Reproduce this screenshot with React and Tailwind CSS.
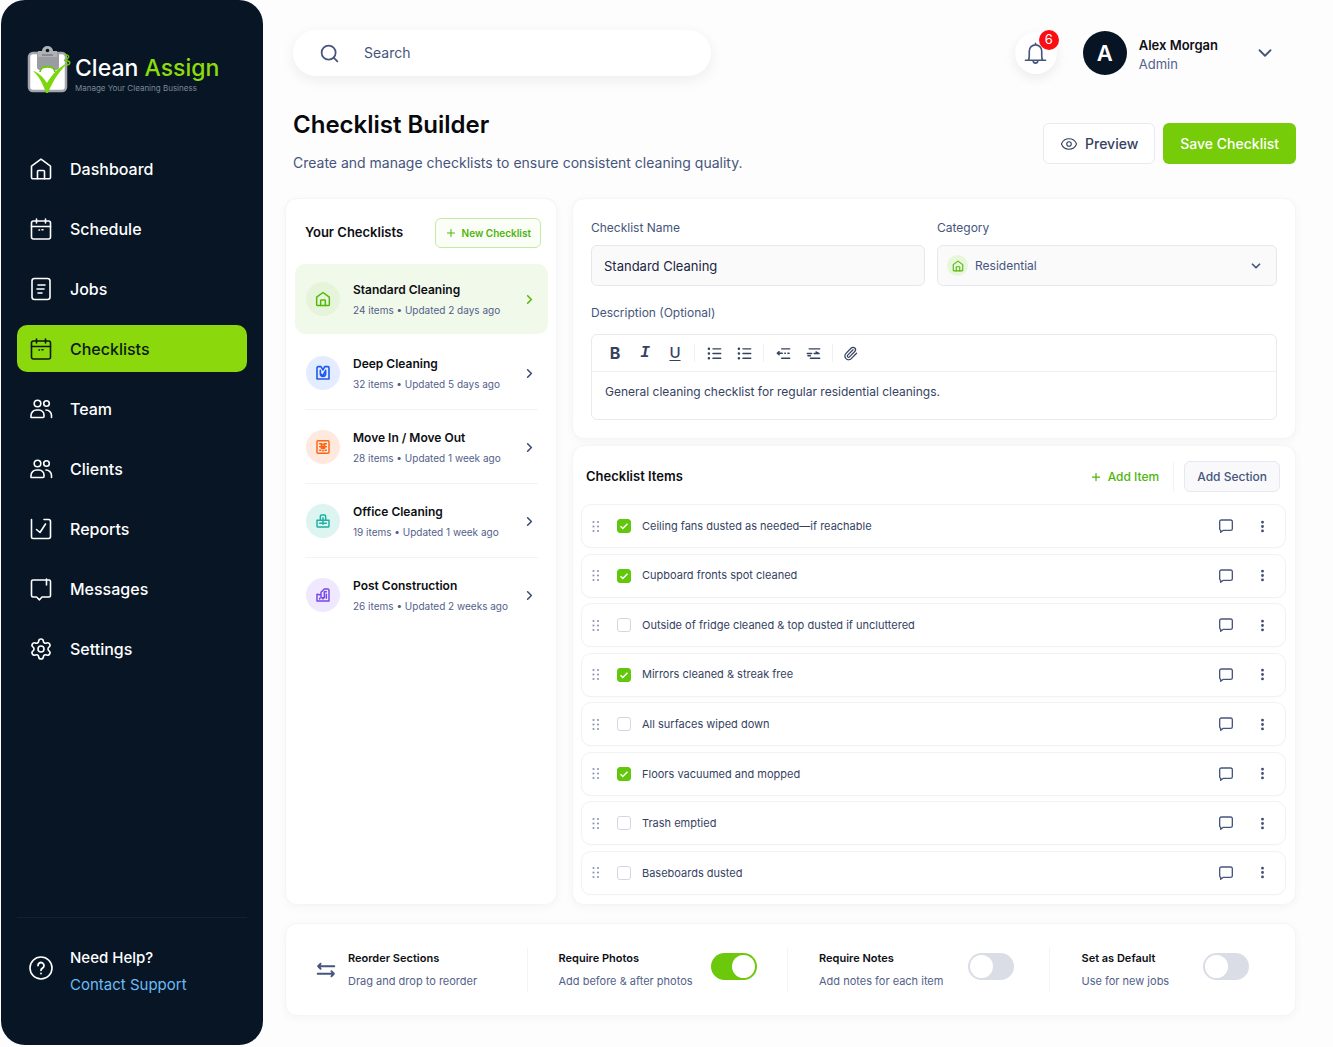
import { useState } from 'react'
import clsx from 'clsx'
import { ChevronDown, ChevronRight, EllipsisVertical, Eye, Paperclip, Plus, Search, Settings } from 'lucide-react'

function Icon({ children, className = 'size-6', strokeWidth = 1.6 }) {
  return (
    <svg
      viewBox="0 0 24 24"
      fill="none"
      stroke="currentColor"
      strokeWidth={strokeWidth}
      strokeLinecap="round"
      strokeLinejoin="round"
      className={clsx('shrink-0', className)}
      aria-hidden="true"
    >
      {children}
    </svg>
  )
}

function HomeIcon(props) {
  return (
    <Icon {...props}>
      <path d="M2.5 9.2 12 2.2l9.5 7v11.3a1.2 1.2 0 0 1-1.2 1.2H3.7a1.2 1.2 0 0 1-1.2-1.2z" />
      <path d="M8.5 21.7v-7.2a1 1 0 0 1 1-1h5a1 1 0 0 1 1 1v7.2" />
    </Icon>
  )
}

function CalendarIcon(props) {
  return (
    <Icon {...props}>
      <rect x="2.5" y="4" width="19" height="18" rx="2" />
      <path d="M2.5 9.5h19M7.5 2v4M16.5 2v4M10 13h.5M13 12.8h1" />
    </Icon>
  )
}

function JobsIcon(props) {
  return (
    <Icon {...props}>
      <rect x="3" y="1.5" width="18" height="21" rx="2.5" />
      <path d="M9 8h7M8 12h7M9 16h4" />
    </Icon>
  )
}

function UsersIcon(props) {
  return (
    <Icon {...props}>
      <circle cx="8.5" cy="6.5" r="3.3" />
      <circle cx="17.5" cy="6.5" r="2.8" />
      <path d="M2 20.500v-2A5.500 5.500 0 0 1 7.500 13H10a5 5 0 0 1 5 5v1.500a1 1 0 0 1-1 1zM17 13a5.500 5.500 0 0 1 5.500 5.500v2" />
    </Icon>
  )
}

function ReportsIcon(props) {
  return (
    <Icon {...props}>
      <path d="M2.5 2.5V20A1.5 1.5 0 0 0 4 21.5h15.5a2 2 0 0 0 2-2v-15a2 2 0 0 0-2-2H15M7.500 12.500l3.500 3 5.500-8.500" />
    </Icon>
  )
}

function MessagesIcon(props) {
  return (
    <Icon {...props}>
      <path d="M19.5 3H4a1.5 1.5 0 0 0-1.5 1.5v14A1.5 1.5 0 0 0 4 20h3.5l3 2.8L13 20h7a1.5 1.5 0 0 0 1.5-1.5v-14A1.5 1.5 0 0 0 20 3M17.5 2v6" />
    </Icon>
  )
}

function SettingsIcon(props) {
  return <Settings {...props} strokeWidth={1.6} />
}

function MapTileIcon(props) {
  return (
    <Icon {...props} strokeWidth={2.4}>
      <path d="M3 21V4a1.5 1.5 0 0 1 1.5-1.5H9l3 5 2.5-5h5A1.5 1.5 0 0 1 21 4v17zM8 8v5a4 4 0 0 0 8 0V8M8 13l4 3 3-6" />
    </Icon>
  )
}

function BoxIcon(props) {
  return (
    <Icon {...props} strokeWidth={2.2}>
      <rect x="3" y="2.5" width="18" height="19" rx="1.5" />
      <path d="M7 7h3l2 2 2-2h3M7 11.5h10M9.5 9v5h5V9M7 17h2M12 16.5V18M15 17h2" />
    </Icon>
  )
}

function OfficeIcon(props) {
  return (
    <Icon {...props} strokeWidth={2.2}>
      <path d="M8 11V5a2 2 0 0 1 2-2h4a2 2 0 0 1 2 2v6M3 11h18v9a1 1 0 0 1-1 1H4a1 1 0 0 1-1-1zM12 7v10M7 15.5h10" />
    </Icon>
  )
}

function CraneIcon(props) {
  return (
    <Icon {...props} strokeWidth={2.2}>
      <path d="M3 21V11l6 1V8l5-5h5a2 2 0 0 1 2 2v16zM9 12v4h5V7h3M17 11v6M7 17v1M12 17v1" />
    </Icon>
  )
}

function CommentIcon(props) {
  return (
    <Icon {...props} strokeWidth={2}>
      <path d="M5 3h14a2.500 2.500 0 0 1 2.500 2.500V16a2.500 2.500 0 0 1-2.500 2.500H8L4 21.500v-3A2.500 2.500 0 0 1 2.500 16V5.500A2.500 2.500 0 0 1 5 3z" />
    </Icon>
  )
}

function BellIcon(props) {
  return (
    <Icon {...props} strokeWidth={1.7}>
      <path d="M1.5 19h21M4.500 19c1-1.500 1-3 1-5V9.500a6.500 6.500 0 0 1 13 0V14c0 2 0 3.500 1 5M12 3V1.500M9.500 19a2.500 3 0 0 0 5 0" />
    </Icon>
  )
}

function ListIcon(props) {
  return (
    <Icon {...props} strokeWidth={2.2}>
      <path d="M9.5 4.5H22M9.5 12H22M9.5 19.5H22" />
      <path d="M3 4.5h.1M3 12h.1M3 19.5h.1" strokeWidth="4" />
    </Icon>
  )
}

function OutdentIcon(props) {
  return (
    <Icon {...props} strokeWidth={2.2}>
      <path d="M9 4.5h13M2 11.5h8M5 9l-3 2.5L5 14M14 11.5h1M19 11.5h2M9 19.5h13" />
    </Icon>
  )
}

function IndentIcon(props) {
  return (
    <Icon {...props} strokeWidth={2.2}>
      <path d="M5 4.5h17M2 12h7M13 12h8M16 9.500l5 2.500M7 19.5h15M3 15.500h4" />
    </Icon>
  )
}

function ReorderIcon(props) {
  return (
    <Icon {...props} strokeWidth={2.2}>
      <path d="M22 7.5H2.5M5.500 4.500l-3 3 3 3M2 16.500h19.500M18.500 13.500l3 3-3 3" />
    </Icon>
  )
}

function GripIcon() {
  return (
    <svg viewBox="0 0 8 13" fill="currentColor" className="h-[13px] w-2 shrink-0 text-[#8f98b5]" aria-hidden="true">
      {[2, 6.5, 11].map((y) => (
        <g key={y}>
          <circle cx="1.500" cy={y} r="1.100" />
          <circle cx="6" cy={y} r="1.100" />
        </g>
      ))}
    </svg>
  )
}

function Logo() {
  return (
    <div className="flex items-center">
      <svg viewBox="0 0 46 50" className="h-[50px] w-[46px] shrink-0" aria-hidden="true">
        <rect x="2" y="7" width="37" height="38" rx="4" fill="#fff" stroke="#a3a5ab" strokeWidth="2.5" />
        <path d="M10 7h22v14a3 3 0 0 1-3 3H13a3 3 0 0 1-3-3z" fill="#9b9ca1" />
        <path d="M11 5h4a5.500 5 0 0 1 11 0h4v6H11z" fill="#b1b2b6" />
        <circle cx="20.500" cy="4.500" r="1.800" fill="#071525" />
        <path d="M15 9h11" stroke="#6f7177" strokeWidth="1.200" />
        <path d="M13 26c0-7 15-7 15 0" fill="#fff" stroke="#6cc80b" strokeWidth="1.800" />
        <path d="M6 25c5 1 10 6 14 12C25 28 32 21 42 16c-8 7-16 18-21 31h-2C16 38 12 30 6 25z" fill="#7bd60c" />
        <path d="M38 10c2-2 5 0 3 2s-3 2 0 3 2 4-1 4M37 14l3 1" fill="none" stroke="#6cc80b" strokeWidth="1.500" />
      </svg>
      <div className="ml-0.5 pt-1.5">
        <p className="text-[23px] leading-7 font-medium text-white">
          Clean <span className="text-[#8bdc0c]">Assign</span>
        </p>
        <p className="text-[8px] leading-3 text-[#7f8894]">Manage Your Cleaning Business</p>
      </div>
    </div>
  )
}

const navItems = [
  { label: 'Dashboard', icon: HomeIcon },
  { label: 'Schedule', icon: CalendarIcon },
  { label: 'Jobs', icon: JobsIcon },
  { label: 'Checklists', icon: CalendarIcon, active: true },
  { label: 'Team', icon: UsersIcon },
  { label: 'Clients', icon: UsersIcon },
  { label: 'Reports', icon: ReportsIcon },
  { label: 'Messages', icon: MessagesIcon },
  { label: 'Settings', icon: SettingsIcon },
]

const checklists = [
  { name: 'Standard Cleaning', meta: '24 items • Updated 2 days ago', icon: HomeIcon, tone: 'bg-[#e6f5d9] text-[#54b70b]' },
  { name: 'Deep Cleaning', meta: '32 items • Updated 5 days ago', icon: MapTileIcon, tone: 'bg-[#e4ecff] text-[#1f5bf0]' },
  { name: 'Move In / Move Out', meta: '28 items • Updated 1 week ago', icon: BoxIcon, tone: 'bg-[#ffe9df] text-[#fb6514]' },
  { name: 'Office Cleaning', meta: '19 items • Updated 1 week ago', icon: OfficeIcon, tone: 'bg-[#dcf5f1] text-[#1fae9f]' },
  { name: 'Post Construction', meta: '26 items • Updated 2 weeks ago', icon: CraneIcon, tone: 'bg-[#efe8ff] text-[#7546e8]' },
]

const initialItems = [
  { label: 'Ceiling fans dusted as needed—if reachable', done: true },
  { label: 'Cupboard fronts spot cleaned', done: true },
  { label: 'Outside of fridge cleaned & top dusted if uncluttered', done: false },
  { label: 'Mirrors cleaned & streak free', done: true },
  { label: 'All surfaces wiped down', done: false },
  { label: 'Floors vacuumed and mopped', done: true },
  { label: 'Trash emptied', done: false },
  { label: 'Baseboards dusted', done: false },
]

const card = 'rounded-xl border border-[#f5f5f7] bg-white shadow-[0_2px_10px_rgba(15,23,42,0.04)]'

function Sidebar() {
  return (
    <aside className="mb-0.5 ml-px flex w-[262px] shrink-0 flex-col rounded-3xl bg-[#071525] px-4 text-white">
      <div className="pt-[46px] pl-2.5">
        <Logo />
      </div>

      <nav className="mt-[49px] flex flex-col gap-[13px]">
        {navItems.map(({ label, icon: NavIcon, active }) => (
          <a
            key={label}
            href="#"
            className={clsx(
              'flex h-[47px] items-center gap-[17px] rounded-[10px] pl-3 text-base font-medium',
              active ? 'bg-[#8bd80c] text-[#0b1a12]' : 'text-white',
            )}
          >
            <NavIcon className="size-6" />
            {label}
          </a>
        ))}
      </nav>

      <div className="mt-auto flex h-32 items-start gap-[17px] border-t border-[#14212f] pt-[26px] pl-3">
        <Icon className="mt-3 size-6">
          <circle cx="12" cy="12" r="11" />
          <path d="M9 9.5a3 3 0 1 1 4.500 2.600c-1 .6-1.500 1-1.500 2.200M12 17.500v.1" strokeWidth="1.800" />
        </Icon>
        <div>
          <p className="text-[15px] leading-[27px] font-medium">Need Help?</p>
          <a href="#" className="block text-[15px] leading-[27px] text-[#6bbcf5]">
            Contact Support
          </a>
        </div>
      </div>
    </aside>
  )
}

function TopBar() {
  return (
    <header className="flex items-center pl-2">
      <label className="flex h-[46px] w-[418px] items-center gap-6 rounded-full bg-white pl-[26px] shadow-[0_4px_14px_rgba(15,23,42,0.07)]">
        <Search className="size-[21px] text-[#46557c]" strokeWidth={2} />
        <input
          type="search"
          aria-label="Search"
          placeholder="Search"
          className="min-w-0 flex-1 bg-transparent text-sm text-[#46557c] outline-none placeholder:text-[#46557c]"
        />
      </label>

      <div className="ml-auto flex items-center">
        <button
          aria-label="Notifications"
          className="relative flex size-[42px] items-center justify-center rounded-full bg-white text-[#46557c] shadow-[0_4px_12px_rgba(15,23,42,0.08)]"
        >
          <BellIcon className="size-[23px]" />
          <span className="absolute -top-0.5 -right-0.5 flex size-5 items-center justify-center rounded-full bg-[#fb0d14] text-[13px] text-white">
            6
          </span>
        </button>
        <span className="ml-[26px] flex size-11 items-center justify-center rounded-full bg-[#061424] text-[22px] font-semibold text-white">
          A
        </span>
        <div className="ml-3 pt-1">
          <p className="text-[13px] leading-[19px] font-semibold text-[#0d0f14]">Alex Morgan</p>
          <p className="text-[13px] leading-[19px] text-[#53618a]">Admin</p>
        </div>
        <button aria-label="Account menu" className="mr-5 ml-9 text-[#46557c]">
          <ChevronDown className="size-[22px]" strokeWidth={2} />
        </button>
      </div>
    </header>
  )
}

function ChecklistSidebar() {
  const [selected, setSelected] = useState(0)

  return (
    <section className={clsx(card, 'w-[272px] shrink-0 pt-[19px] pr-2 pl-[9px]')}>
      <div className="flex items-center justify-between pr-[7px] pl-2.5">
        <h2 className="text-[13px] font-semibold text-[#0d0f14]">Your Checklists</h2>
        <button className="flex h-[30px] items-center gap-[5px] rounded-md border border-[#c3eaa4] bg-[#fafef6] px-[9px] text-[10px] font-semibold text-[#4fb50a]">
          <Plus className="size-3" />
          New Checklist
        </button>
      </div>

      <ul className="mt-4">
        {checklists.map(({ name, meta, icon: ListItemIcon, tone }, i) => (
          <li key={name}>
            <button
              onClick={() => setSelected(i)}
              className={clsx(
                'flex h-[70px] w-full items-center rounded-[10px] pr-[11px] pl-[11px] text-left',
                i === selected && 'bg-[#f1f9ea]',
              )}
            >
              <span className={clsx('flex size-[34px] shrink-0 items-center justify-center rounded-full', tone)}>
                <ListItemIcon className="size-4" strokeWidth={2.2} />
              </span>
              <span className="ml-[13px] flex-1 pt-0.5 whitespace-nowrap">
                <span className="block text-xs leading-5 font-semibold text-[#0d0f14]">{name}</span>
                <span className="block text-[10px] leading-5 text-[#53618a]">{meta}</span>
              </span>
              <ChevronRight
                className={clsx('size-[15px] shrink-0', i === selected ? 'text-[#54b70b]' : 'text-[#3d4b70]')}
                strokeWidth={2.5}
              />
            </button>
            <div
              className={clsx(
                'mx-2.5 mt-px mb-0.5 h-px',
                i !== selected && i < checklists.length - 1 ? 'bg-[#f2f3f5]' : 'bg-transparent',
              )}
            />
          </li>
        ))}
      </ul>
    </section>
  )
}

const tool = 'flex w-[30px] items-center justify-center'

function ToolDivider() {
  return <span className="mx-1 h-[18px] w-px bg-[#eff0f4]" />
}

function DetailsForm() {
  return (
    <section className={clsx(card, 'px-[18px] pt-[19px] pb-[18px] text-[#46557c]')}>
      <div className="grid grid-cols-[334fr_340fr] gap-3">
        <div>
          <label htmlFor="name" className="block text-xs leading-5">
            Checklist Name
          </label>
          <input
            id="name"
            defaultValue="Standard Cleaning"
            className="mt-[7px] h-[41px] w-full rounded-md border border-[#e7e8ef] bg-[#fafafb] px-3 text-[13px] text-[#1c2640] outline-none"
          />
        </div>
        <div>
          <label htmlFor="category" className="block text-xs leading-5">
            Category
          </label>
          <div className="mt-[7px] flex h-[41px] items-center rounded-md border border-[#e7e8ef] bg-[#fafafb] pr-[13px] pl-[9px]">
            <span className="flex size-[21px] items-center justify-center rounded-full bg-[#e8f7dc] text-[#54b70b]">
              <HomeIcon className="size-3" strokeWidth={2.2} />
            </span>
            <select id="category" className="ml-[7px] h-full flex-1 appearance-none bg-transparent text-xs outline-none">
              <option>Residential</option>
              <option>Commercial</option>
            </select>
            <ChevronDown className="size-3.5" strokeWidth={3} />
          </div>
        </div>
      </div>

      <label htmlFor="description" className="mt-[17px] block text-xs leading-5">
        Description (Optional)
      </label>
      <div className="mt-[11px] rounded-md border border-[#e9eaf0]">
        <div className="flex h-[37px] items-center border-b border-[#eeeff3] pl-2 text-[#35425f]">
          <button aria-label="Bold" className={clsx(tool, 'text-base font-bold')}>
            B
          </button>
          <button aria-label="Italic" className={clsx(tool, 'font-["Liberation_Mono",monospace] text-base font-bold italic')}>
            I
          </button>
          <button aria-label="Underline" className={clsx(tool, 'text-[15px] font-medium underline underline-offset-2')}>
            U
          </button>
          <ToolDivider />
          <button aria-label="Numbered list" className={tool}>
            <ListIcon className="size-[15px]" />
          </button>
          <button aria-label="Bulleted list" className={tool}>
            <ListIcon className="size-[15px]" />
          </button>
          <ToolDivider />
          <button aria-label="Outdent" className={tool}>
            <OutdentIcon className="size-[15px]" />
          </button>
          <button aria-label="Indent" className={tool}>
            <IndentIcon className="size-[15px]" />
          </button>
          <ToolDivider />
          <button aria-label="Attach file" className="flex w-[26px] items-center justify-center">
            <Paperclip className="size-[15px]" />
          </button>
        </div>
        <textarea
          id="description"
          rows={1}
          defaultValue="General cleaning checklist for regular residential cleanings."
          className="block h-[47px] w-full resize-none bg-transparent px-[13px] pt-2.5 text-xs leading-5 text-[#35425f] outline-none"
        />
      </div>
    </section>
  )
}

function ChecklistItems() {
  const [items, setItems] = useState(initialItems)

  const toggle = (index) => {
    setItems(items.map((item, i) => (i === index ? { ...item, done: !item.done } : item)))
  }

  return (
    <section className={clsx(card, 'flex flex-1 flex-col pt-[15px] pr-[9px] pb-[9px] pl-2')}>
      <div className="flex items-center pr-1.5 pl-[5px]">
        <h2 className="text-[13px] font-semibold text-[#0d0f14]">Checklist Items</h2>
        <button className="ml-auto flex items-center gap-1.5 text-xs font-medium text-[#4fb50a]">
          <Plus className="size-3" strokeWidth={2.5} />
          Add Item
        </button>
        <span className="mr-2.5 ml-3.5 h-[30px] w-px bg-[#f4f4f6]" />
        <button className="h-[31px] rounded-md border border-[#e7e8ef] bg-[#f9f9fb] px-3 text-xs font-medium text-[#46557c]">
          Add Section
        </button>
      </div>

      <ul className="mt-3 flex flex-1 flex-col justify-between gap-1">
        {items.map((item, i) => (
          <li
            key={item.label}
            className="flex h-11 items-center rounded-[10px] border border-[#f2f2f5] bg-white pr-[15px] pl-2.5 shadow-[0_1px_2px_rgba(15,23,42,0.02)]"
          >
            <GripIcon />
            <label className="ml-[17px] flex items-center gap-[11px] text-[11px] text-[#35425f]">
              <span className="grid size-3.5 place-items-center">
                <input
                  type="checkbox"
                  checked={item.done}
                  onChange={() => toggle(i)}
                  className="peer col-start-1 row-start-1 size-3.5 appearance-none rounded-[3px] border border-[#d3d7e4] bg-white checked:border-[#62c70a] checked:bg-[#62c70a]"
                />
                <svg
                  viewBox="0 0 14 14"
                  fill="none"
                  stroke="#fff"
                  strokeWidth="1.500"
                  className="pointer-events-none col-start-1 row-start-1 hidden size-3.5 peer-checked:block"
                  aria-hidden="true"
                >
                  <path d="m3.500 7.200 2.300 2.300 4.700-4.800" />
                </svg>
              </span>
              {item.label}
            </label>
            <button aria-label="Comment" className="ml-auto text-[#46557c]">
              <CommentIcon className="size-4" />
            </button>
            <button aria-label="More options" className="ml-[21px] text-[#3d4b70]">
              <EllipsisVertical className="size-[15px]" strokeWidth={2.5} />
            </button>
          </li>
        ))}
      </ul>
    </section>
  )
}

function SettingToggle({ id, title, text, defaultChecked, className }) {
  return (
    <div className={clsx('flex h-11 border-l border-[#f4f4f6] pl-[31px]', className)}>
      <label htmlFor={id} className="whitespace-nowrap">
        <span className="block text-[11px] leading-5 font-semibold text-[#0d0f14]">{title}</span>
        <span className="mt-[3px] block text-[11px] leading-5 text-[#53618a]">{text}</span>
      </label>
      <input
        id={id}
        type="checkbox"
        role="switch"
        defaultChecked={defaultChecked}
        className="mt-[5px] ml-auto flex h-[27px] w-[46px] shrink-0 appearance-none items-center rounded-full bg-[#dadde6] px-0.5 before:size-[23px] before:rounded-full before:bg-white checked:justify-end checked:bg-[#6cc80b]"
      />
    </div>
  )
}

function OptionsBar() {
  return (
    <section className={clsx(card, 'mt-[18px] grid h-[93px] grid-cols-[241fr_261fr_263fr_246fr] items-center')}>
      <div className="flex h-11 items-center pl-[30px]">
        <ReorderIcon className="size-5 text-[#46557c]" />
        <div className="ml-3">
          <p className="text-[11px] leading-5 font-semibold text-[#0d0f14]">Reorder Sections</p>
          <p className="mt-[3px] text-[11px] leading-5 text-[#53618a]">Drag and drop to reorder</p>
        </div>
      </div>
      <SettingToggle id="photos" title="Require Photos" text="Add before & after photos" defaultChecked className="pr-[30px]" />
      <SettingToggle id="notes" title="Require Notes" text="Add notes for each item" className="pr-[35px]" />
      <SettingToggle id="default" title="Set as Default" text="Use for new jobs" className="pr-[46px]" />
    </section>
  )
}

export default function App() {
  return (
    <div className="flex min-h-screen bg-[#fdfdfd] font-[Inter,'Open_Sans',sans-serif]">
      <Sidebar />

      <main className="flex min-w-0 flex-1 flex-col pt-[30px] pr-[37px] pb-[31px] pl-[22px]">
        <TopBar />

        <div className="mt-[33px] flex items-end justify-between pl-2">
          <div>
            <h1 className="text-2xl leading-8 font-semibold text-[#08090c]">Checklist Builder</h1>
            <p className="mt-2.5 text-sm leading-6 text-[#46557c]">
              Create and manage checklists to ensure consistent cleaning quality.
            </p>
          </div>
          <div className="mb-[11px] flex gap-2 text-sm font-medium">
            <button className="flex h-[41px] items-center gap-[7px] rounded-md border border-[#e9eaf0] bg-white px-4 text-[#35425f]">
              <Eye className="size-[18px]" strokeWidth={1.5} />
              Preview
            </button>
            <button className="h-[41px] rounded-md bg-[#76cc08] px-[17px] text-white">Save Checklist</button>
          </div>
        </div>

        <div className="mt-[23px] flex flex-1 gap-[15px]">
          <ChecklistSidebar />
          <div className="flex min-w-0 flex-1 flex-col gap-1.5">
            <DetailsForm />
            <ChecklistItems />
          </div>
        </div>

        <OptionsBar />
      </main>
    </div>
  )
}
